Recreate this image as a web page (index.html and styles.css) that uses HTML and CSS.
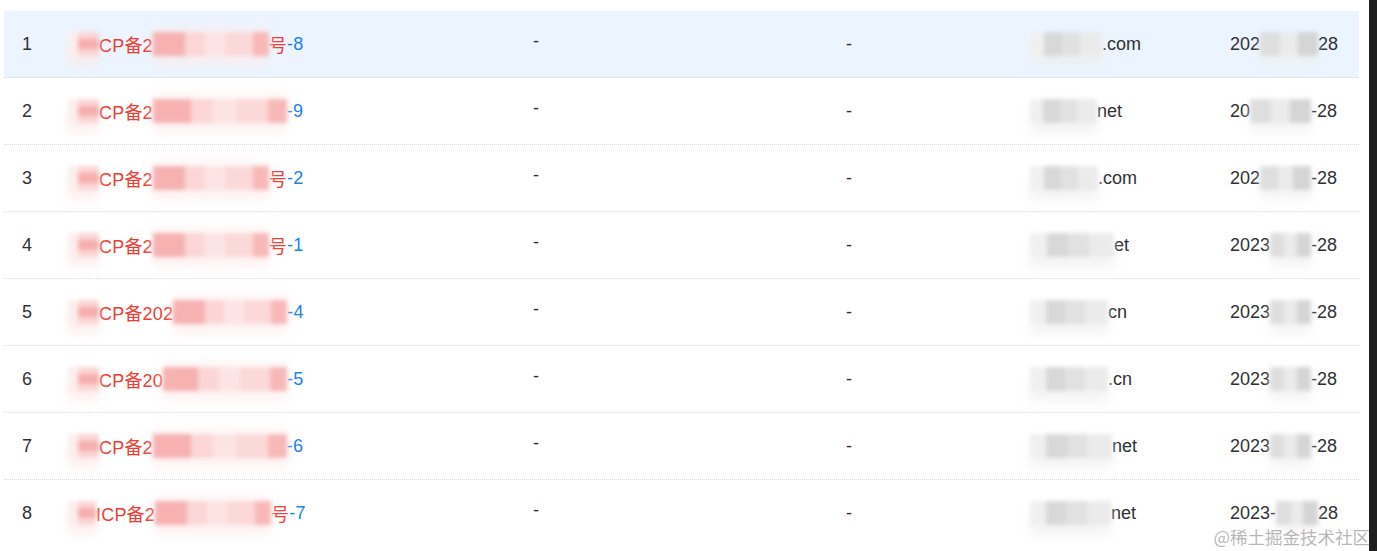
FILE: index.html
```html
<!DOCTYPE html>
<html lang="zh-CN">
<head>
<meta charset="utf-8">
<title>备案列表</title>
<link rel="stylesheet" href="styles.css">
</head>
<body>
<div class="screen">
  <div class="main">
    <div class="table">
      <div class="thead">
        <div class="th c1">序号</div>
        <div class="th c2">备案/许可证号</div>
        <div class="th c3">网站名称</div>
        <div class="th c4"></div>
        <div class="th c5">网站域名</div>
        <div class="th c6">审核时间</div>
      </div>

      <div class="row active">
        <div class="td c1">1</div>
        <div class="td c2"><span class="mz pa"></span><span class="red">CP备2</span><span class="mz pb w116"></span><span class="red">号</span><span class="blue">-8</span></div>
        <div class="td c3"><span class="dash">-</span></div>
        <div class="td c4">-</div>
        <div class="td c5"><span class="mz gb w72"></span>.com</div>
        <div class="td c6">202<span class="mz gc w58"></span>28</div>
      </div>

      <div class="row">
        <div class="td c1">2</div>
        <div class="td c2"><span class="mz pa"></span><span class="red">CP备2</span><span class="mz pb w134"></span><span class="blue">-9</span></div>
        <div class="td c3"><span class="dash">-</span></div>
        <div class="td c4">-</div>
        <div class="td c5"><span class="mz gb w67"></span>net</div>
        <div class="td c6">20<span class="mz gc w61"></span>-28</div>
      </div>

      <div class="row">
        <div class="td c1">3</div>
        <div class="td c2"><span class="mz pa"></span><span class="red">CP备2</span><span class="mz pb w116"></span><span class="red">号</span><span class="blue">-2</span></div>
        <div class="td c3"><span class="dash">-</span></div>
        <div class="td c4">-</div>
        <div class="td c5"><span class="mz gb w68"></span>.com</div>
        <div class="td c6">202<span class="mz gc w51"></span>-28</div>
      </div>

      <div class="row">
        <div class="td c1">4</div>
        <div class="td c2"><span class="mz pa"></span><span class="red">CP备2</span><span class="mz pb w116"></span><span class="red">号</span><span class="blue">-1</span></div>
        <div class="td c3"><span class="dash">-</span></div>
        <div class="td c4">-</div>
        <div class="td c5"><span class="mz gb w84"></span>et</div>
        <div class="td c6">2023<span class="mz gc w41"></span>-28</div>
      </div>

      <div class="row">
        <div class="td c1">5</div>
        <div class="td c2"><span class="mz pa"></span><span class="red">CP备202</span><span class="mz pb w114"></span><span class="blue">-4</span></div>
        <div class="td c3"><span class="dash">-</span></div>
        <div class="td c4">-</div>
        <div class="td c5"><span class="mz gb w78"></span>cn</div>
        <div class="td c6">2023<span class="mz gc w41"></span>-28</div>
      </div>

      <div class="row">
        <div class="td c1">6</div>
        <div class="td c2"><span class="mz pa"></span><span class="red">CP备20</span><span class="mz pb w124"></span><span class="blue">-5</span></div>
        <div class="td c3"><span class="dash">-</span></div>
        <div class="td c4">-</div>
        <div class="td c5"><span class="mz gb w78"></span>.cn</div>
        <div class="td c6">2023<span class="mz gc w41"></span>-28</div>
      </div>

      <div class="row">
        <div class="td c1">7</div>
        <div class="td c2"><span class="mz pa"></span><span class="red">CP备2</span><span class="mz pb w134"></span><span class="blue">-6</span></div>
        <div class="td c3"><span class="dash">-</span></div>
        <div class="td c4">-</div>
        <div class="td c5"><span class="mz gb w82"></span>net</div>
        <div class="td c6">2023<span class="mz gc w41"></span>-28</div>
      </div>

      <div class="row last">
        <div class="td c1">8</div>
        <div class="td c2"><span class="mz pa pa8"></span><span class="red">ICP备2</span><span class="mz pb w116"></span><span class="red">号</span><span class="blue">-7</span></div>
        <div class="td c3"><span class="dash">-</span></div>
        <div class="td c4">-</div>
        <div class="td c5"><span class="mz gb w81"></span>net</div>
        <div class="td c6">2023-<span class="mz gc w42"></span>28</div>
      </div>
    </div>
  </div>
  <div class="edge"></div>
</div>
<div class="watermark">@稀土掘金技术社区</div>
</body>
</html>
```

FILE: styles.css
```css
html, body {
  margin: 0;
  padding: 0;
  background: #ffffff;
}

body {
  font-family: "Liberation Sans", "Noto Sans CJK SC", sans-serif;
  font-size: 18px;
  color: #303133;
  overflow: hidden;
  width: 1377px;
  height: 551px;
  position: relative;
}

.screen {
  display: flex;
  height: 551px;
}

.main {
  flex: 1;
  padding: 0 10px 0 4px;
}

.edge {
  width: 8px;
  background: #1e1e1e;
}

.table {
  width: 1355px;
}

.thead,
.row {
  display: grid;
  grid-template-columns: 64px 412px 320px 200px 200px 1fr;
}

.thead {
  height: 11px;
  overflow: hidden;
}

.th {
  font-weight: bold;
  color: #b4b6ba;
  line-height: 18px;
  margin-top: -17px;
  white-space: nowrap;
}

.thead .c1 { padding-left: 0; }
.thead .c2 { padding-left: 48px; }
.thead .c3 { padding-left: 47px; }
.thead .c5 { padding-left: 66px; }
.thead .c6 { padding-left: 76px; }

.row {
  height: 66px;
  border-bottom: 1px dotted #d6d6d6;
}

.row.active {
  background: #ecf5ff;
}

.row.last {
  border-bottom: none;
}

.td {
  display: flex;
  align-items: center;
  white-space: nowrap;
}

.row .c1 { padding-left: 18px; }
.row .c3 { padding-left: 53px; }
.row .c4 { padding-left: 46px; }
.row .c5 { padding-left: 30px; }
.row .c6 { padding-left: 30px; }

.dash {
  padding-bottom: 6px;
}

.red { color: #ee3d33; }
.blue { color: #1a84e4; }

.c2 .red,
.c2 .blue {
  letter-spacing: 0.2px;
}

.mz {
  display: inline-block;
  height: 24px;
  flex: none;
  filter: blur(2px);
}

.pa {
  width: 31px;
  background:
    linear-gradient(180deg, rgba(255,255,255,0) 0 30%, rgba(246,166,166,0.85) 30% 70%, rgba(255,255,255,0) 70%) 10px 0 / 21px 100% no-repeat,
    linear-gradient(90deg, #fdeeee 0 10px, #fbd6d6 10px 31px);
  box-shadow: 0 10px 8px rgba(253, 230, 230, 0.6);
}

.pa8 {
  width: 28px;
}

.pb {
  background:
    linear-gradient(90deg, #f7b1b1 0 28%, #fcd6d6 28% 45%, #fde4e4 45% 62%, #fcd9d9 62% 86%, #f8b8b8 86%);
  box-shadow: 0 10px 10px rgba(253, 234, 234, 0.6), 0 -6px 8px rgba(253, 238, 238, 0.5);
}

.gb {
  background:
    linear-gradient(90deg, #f0f0f0 0 20%, #d8d8d8 20% 45%, #e1e1e1 45% 70%, #ebebeb 70%);
  box-shadow: 0 10px 10px rgba(236, 236, 236, 0.6);
}

.gc {
  background:
    linear-gradient(90deg, #dedede 0 35%, #ebebeb 35% 65%, #d5d5d5 65%);
  box-shadow: 0 10px 8px rgba(238, 238, 238, 0.6);
}

.w41 { width: 41px; }
.w42 { width: 42px; }
.w51 { width: 51px; }
.w58 { width: 58px; }
.w61 { width: 61px; }
.w67 { width: 67px; }
.w68 { width: 68px; }
.w72 { width: 72px; }
.w78 { width: 78px; }
.w81 { width: 81px; }
.w82 { width: 82px; }
.w84 { width: 84px; }
.w114 { width: 114px; }
.w116 { width: 116px; }
.w124 { width: 124px; }
.w134 { width: 134px; }

.watermark {
  position: absolute;
  right: 7px;
  top: 524px;
  font-family: "Noto Sans CJK SC", sans-serif;
  font-size: 17.5px;
  color: rgba(160, 160, 160, 0.75);
  white-space: nowrap;
}
```
